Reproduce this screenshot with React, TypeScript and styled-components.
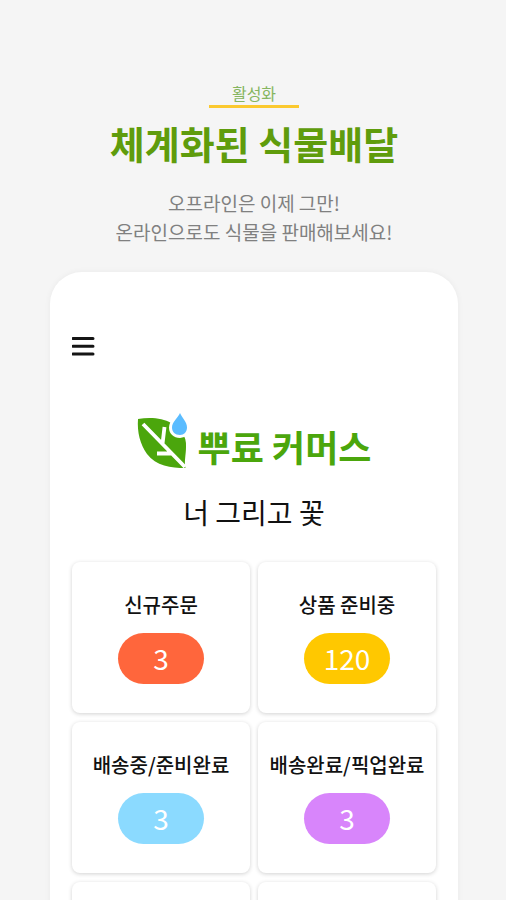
import React from "react";
import styled, { createGlobalStyle } from "styled-components";

const GlobalStyle = createGlobalStyle`
  *, *::before, *::after { box-sizing: border-box; }
  body {
    margin: 0;
    background: #f5f5f5;
    font-family: "Noto Sans CJK KR", "Noto Sans", sans-serif;
  }
  h1, h2, h3, p { margin: 0; }
`;

const Page = styled.main`
  display: flex;
  flex-direction: column;
  height: 100vh;
  overflow: hidden;
  padding: 81px 48px 0 50px;
`;

const Intro = styled.header`
  display: flex;
  flex: none;
  flex-direction: column;
  align-items: center;
  text-align: center;
`;

const Eyebrow = styled.p`
  width: 90px;
  border-bottom: 3px solid #fbc92f;
  color: #86b560;
  font-size: 16px;
  font-weight: 400;
  line-height: 24px;
`;

const Title = styled.h1`
  margin-top: 7px;
  color: #5f9c0c;
  font-size: 38px;
  font-weight: 700;
  line-height: 56px;
`;

const Lead = styled.p`
  margin-top: 17px;
  color: #808080;
  font-size: 19px;
  font-weight: 400;
  line-height: 29px;
`;

const Phone = styled.section`
  flex: none;
  margin-top: 26px;
  padding: 62px 22px 22px;
  border-radius: 32px;
  background: #fff;
  box-shadow: 0 0 6px rgba(0, 0, 0, 0.05);
`;

const MenuButton = styled.button`
  display: block;
  padding: 0;
  border: 0;
  background: none;
  line-height: 0;
  cursor: pointer;
`;

const Brand = styled.div`
  display: flex;
  align-items: flex-start;
  justify-content: center;
  gap: 10px;
  margin-top: 55px;
`;

const BrandName = styled.h2`
  padding-top: 5px;
  color: #4ba60c;
  font-size: 36px;
  font-weight: 700;
  line-height: 56px;
`;

const ShopName = styled.p`
  margin-top: 18px;
  color: #111;
  font-size: 28px;
  line-height: 40px;
  text-align: center;
`;

const CardGrid = styled.div`
  display: grid;
  grid-template-columns: 1fr 1fr;
  gap: 9px 8px;
  margin-top: 30px;
`;

const Card = styled.article`
  display: flex;
  flex-direction: column;
  align-items: center;
  gap: 13px;
  min-height: 151px;
  padding: 28px 0 29px;
  border-radius: 8px;
  background: #fff;
  box-shadow: 0 1px 4px rgba(0, 0, 0, 0.18);
`;

const CardLabel = styled.h3`
  color: #111;
  font-size: 20px;
  font-weight: 500;
  line-height: 30px;
  white-space: nowrap;
`;

const Count = styled.p<{ $color: string }>`
  width: 86px;
  border-radius: 26px;
  background: ${(p) => p.$color};
  color: #fff;
  font-size: 28px;
  font-weight: 400;
  line-height: 51px;
  text-align: center;
`;

const statuses = [
  { label: "신규주문", count: 3, color: "#ff663c" },
  { label: "상품 준비중", count: 120, color: "#ffc800" },
  { label: "배송중/준비완료", count: 3, color: "#8bdaff" },
  { label: "배송완료/픽업완료", count: 3, color: "#d885fb" },
];

function MenuIcon() {
  return (
    <svg width="24" height="24" viewBox="0 0 24 24" fill="none" stroke="#151515" strokeWidth="3" strokeLinecap="round" aria-hidden="true">
      <path d="M1 4.500h20M1 12.300h20M1 20h20" />
    </svg>
  );
}

function LeafLogo() {
  return (
    <svg width="51" height="56" viewBox="0 0 51 56" aria-hidden="true">
      <path
        d="M1 6C13 4 26 5 34 10C43 15 50 23 49 34C49 42 47 48 48.500 55C34 55 19 53 10 41C3 31 0 19 1 6Z"
        fill="#4ba60c"
      />
      <path d="M6 11L48 54M25.500 31L27.500 14M35 40.500H20" fill="none" stroke="#fff" strokeWidth="3.800" />
      <path
        d="M43 0C45 5 50 9 50 14.500C50 19 47 22 43 22C38 22 35 19 35 14.500C35 9 41 5 43 0Z"
        fill="#5bbcff"
        stroke="#fff"
        strokeWidth="6"
        paintOrder="stroke"
      />
    </svg>
  );
}

export default function App() {
  return (
    <>
      <GlobalStyle />
      <Page>
        <Intro>
          <Eyebrow>활성화</Eyebrow>
          <Title>체계화된 식물배달</Title>
          <Lead>
            오프라인은 이제 그만!
            <br />
            온라인으로도 식물을 판매해보세요!
          </Lead>
        </Intro>
        <Phone>
          <MenuButton type="button" aria-label="메뉴">
            <MenuIcon />
          </MenuButton>
          <Brand>
            <LeafLogo />
            <BrandName>뿌료 커머스</BrandName>
          </Brand>
          <ShopName>너 그리고 꽃</ShopName>
          <CardGrid>
            {statuses.map((s) => (
              <Card key={s.label}>
                <CardLabel>{s.label}</CardLabel>
                <Count $color={s.color}>{s.count}</Count>
              </Card>
            ))}
            <Card />
            <Card />
          </CardGrid>
        </Phone>
      </Page>
    </>
  );
}
